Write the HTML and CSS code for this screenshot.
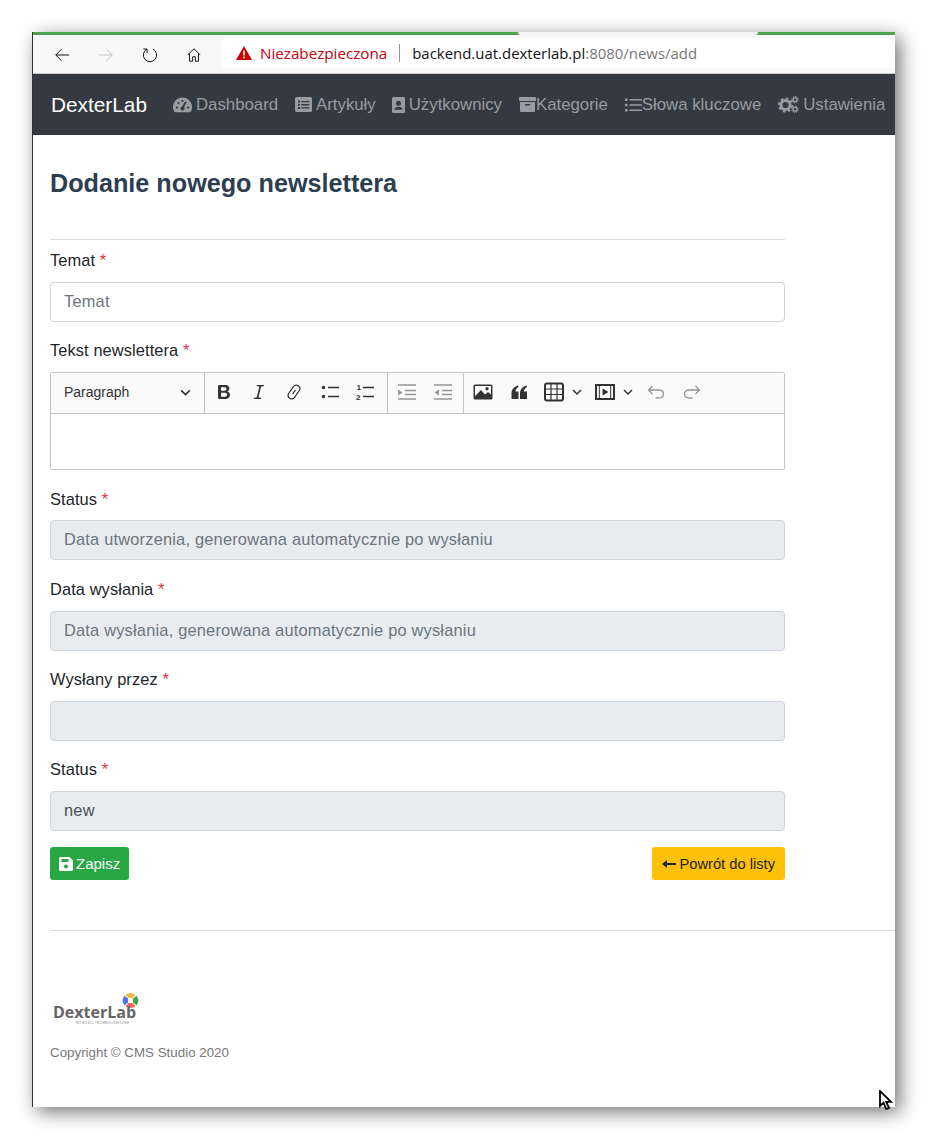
FILE: index.html
```html
<!DOCTYPE html>
<html>
	<head>
		<meta charset="utf-8" />
		<title>Dodanie nowego newslettera</title>
		<link rel="stylesheet" href="styles.css">
	</head>
	<body>
	<div class="window">
		<div class="tabline"><span class="tabgap"></span></div>
		<div class="browserbar">
			<div class="browserbtns">
				<svg class="bicon" viewBox="0 0 18 18"><path d="M17 9H2M8.500 2.500 2 9l6.500 6.500" fill="none" stroke="#111" stroke-width="1.100"/></svg>
				<svg class="bicon" viewBox="0 0 18 18"><path d="M1 9h15M9.500 2.500 16 9l-6.500 6.500" fill="none" stroke="#c4c4c4" stroke-width="1.100"/></svg>
				<svg class="bicon" viewBox="0 0 18 18"><path d="M12.300 2.300A7.500 7.500 0 1 1 5.700 2.300M5.700 2.300V6.800M5.700 2.300H1.500" fill="none" stroke="#111" stroke-width="1.100"/></svg>
				<svg class="bicon" viewBox="0 0 18 18"><path d="M2 9 9 2l7 7M4 7.500V16h3.500v-5h3v5H14V7.500" fill="none" stroke="#111" stroke-width="1.100"/></svg>
			</div>
			<div class="address">
				<svg class="warn" viewBox="0 0 16 14"><path d="M8 0 16 14H0z" fill="#c90000"/><path d="M7.200 4.500h1.600v5H7.200zM7.200 10.600h1.600v1.600H7.200z" fill="#fff"/></svg>
				<span class="notsafe">Niezabezpieczona</span>
				<span class="addrsep"></span>
				<span class="url">backend.uat.dexterlab.pl<span class="urlpath">:8080/news/add</span></span>
			</div>
		</div>

		<nav class="navbar">
			<a class="brand">DexterLab</a>
			<a class="navlink">
				<svg class="nicon" width="19" height="16" viewBox="0 0 19 16"><path d="M9.500 0.500A9.500 9.500 0 0 0 1.300 14.800c.2.300.5.500.9.500h14.600c.4 0 .7-.2.900-.5A9.500 9.500 0 0 0 9.500 .5z" fill="currentColor"/><path d="M12.800 4.800 9.800 10.500" stroke="#343a40" stroke-width="1.800"/><circle cx="9.500" cy="11.500" r="2" fill="#343a40"/><circle cx="4" cy="10.500" r="1.100" fill="#343a40"/><circle cx="5.500" cy="6" r="1.100" fill="#343a40"/><circle cx="9.500" cy="4" r="1.100" fill="#343a40"/><circle cx="15" cy="10.500" r="1.100" fill="#343a40"/></svg>
				<span class="navtext">Dashboard</span>
			</a>
			<a class="navlink navlink-close">
				<svg class="nicon" width="17" height="15" viewBox="0 0 17 15"><path d="M1.500 0h14A1.500 1.500 0 0 1 17 1.500v12a1.500 1.500 0 0 1-1.500 1.500h-14A1.500 1.500 0 0 1 0 13.500v-12A1.500 1.500 0 0 1 1.500 0z" fill="currentColor"/><path d="M3 3.500h2v2H3zM3 6.700h2v2H3zM3 9.900h2v2H3zM6.300 3.900h8v1.300h-8zM6.300 7.100h8v1.300h-8zM6.300 10.300h8v1.300h-8z" fill="#343a40"/></svg>
				<span class="navtext">Artykuły</span>
			</a>
			<a class="navlink">
				<svg class="nicon" width="13" height="16" viewBox="0 0 13 16"><rect width="13" height="16" rx="1.500" fill="currentColor"/><circle cx="6.500" cy="6.200" r="2.500" fill="#343a40"/><path d="M2.500 12.800c0-2 1.500-3 4-3s4 1 4 3z" fill="#343a40"/></svg>
				<span class="navtext">Użytkownicy</span>
			</a>
			<a class="navlink">
				<svg class="nicon tight" width="17" height="15" viewBox="0 0 17 15"><path d="M0 1a1 1 0 0 1 1-1h15a1 1 0 0 1 1 1v3H0zM1 5h15v9a1 1 0 0 1-1 1H2a1 1 0 0 1-1-1z" fill="currentColor"/><path d="M6 7h5v1.500H6z" fill="#343a40"/></svg>
				<span class="navtext">Kategorie</span>
			</a>
			<a class="navlink">
				<svg class="nicon tight" width="17" height="14" viewBox="0 0 17 14"><path d="M0 .5h2.500v2.500H0zM0 5.700h2.500v2.500H0zM0 11h2.500v2.500H0zM4.500 1h12.500v1.500H4.500zM4.500 6.200h12.500v1.500H4.500zM4.500 11.500h12.500V13H4.500z" fill="currentColor"/></svg>
				<span class="navtext">Słowa kluczowe</span>
			</a>
			<a class="navlink">
				<svg class="nicon" width="21" height="17" viewBox="0 0 21 17"><circle cx="7.500" cy="9" r="4.600" fill="none" stroke="currentColor" stroke-width="3"/><circle cx="7.500" cy="9" r="6.600" fill="none" stroke="currentColor" stroke-width="2" stroke-dasharray="2.600 2.580"/><circle cx="17" cy="3.700" r="2" fill="none" stroke="currentColor" stroke-width="1.500"/><circle cx="17" cy="13.300" r="2" fill="none" stroke="currentColor" stroke-width="1.500"/><circle cx="17" cy="3.700" r="3.300" fill="none" stroke="currentColor" stroke-width="1" stroke-dasharray="1.300 1.290"/><circle cx="17" cy="13.300" r="3.300" fill="none" stroke="currentColor" stroke-width="1" stroke-dasharray="1.300 1.290"/></svg>
				<span class="navtext">Ustawienia</span>
			</a>
		</nav>

		<main class="content">
			<h1 class="title">Dodanie nowego newslettera</h1>
			<hr class="line topline">
			<form class="newsform">
				<div class="field">
					<label class="lbl">Temat <span class="req">*</span></label>
					<input class="inp" type="text" placeholder="Temat">
				</div>
				<div class="field field-editor">
					<label class="lbl">Tekst newslettera <span class="req">*</span></label>
					<div class="editor">
						<div class="toolbar">
							<div class="parsel">
								<span>Paragraph</span>
								<svg class="chev" viewBox="0 0 10 10"><path d="M1 3l4 4 4-4" fill="none" stroke="#333" stroke-width="1.500"/></svg>
							</div>
							<span class="tsep"></span>
							<div class="tbtn"><svg viewBox="0 0 20 20"><path d="M10.187 17H5.773c-.637 0-1.092-.138-1.364-.415-.273-.277-.409-.718-.409-1.323V4.738c0-.617.14-1.062.419-1.332.279-.27.73-.406 1.354-.406h4.68c.69 0 1.288.041 1.793.124.506.083.96.242 1.36.478.341.197.644.447.906.75a3.262 3.262 0 0 1 .808 2.162c0 1.401-.722 2.426-2.167 3.075C15.05 10.175 16 11.315 16 13.01a3.756 3.756 0 0 1-2.296 3.504 6.1 6.1 0 0 1-1.517.377c-.571.073-1.238.11-2 .11zm-.217-6.217H7v4.087h3.069c1.977 0 2.965-.69 2.965-2.072 0-.707-.256-1.22-.768-1.537-.512-.319-1.277-.478-2.296-.478zM7 5.130v3.619h2.606c.729 0 1.292-.067 1.690-.2a1.600 1.600 0 0 0 .91-.765c.165-.267.247-.566.247-.897 0-.707-.26-1.176-.778-1.409-.519-.232-1.310-.348-2.375-.348H7z" fill="#333"/></svg></div>
							<div class="tbtn"><svg viewBox="0 0 20 20"><path d="m9.586 14.633.021.004c-.036.335.095.655.393.962.082.083.173.15.274.201h1.474a.6.6 0 1 1 0 1.200H5.304a.6.6 0 0 1 0-1.200h1.150c.474-.07.809-.182 1.005-.334.157-.122.291-.32.404-.597l2.416-9.550a1.053 1.053 0 0 0-.281-.823 1.120 1.120 0 0 0-.442-.296H8.150a.6.6 0 0 1 0-1.200h6.443a.6.6 0 1 1 0 1.200h-1.195c-.376.056-.65.155-.823.296-.215.175-.423.439-.623.79l-2.366 9.347z" fill="#333"/></svg></div>
							<div class="tbtn"><svg viewBox="0 0 20 20"><g fill="none" stroke="#333" stroke-width="1.200" transform="rotate(-55 10 10)"><rect x="2.500" y="6.500" width="15" height="7" rx="3.500"/><path d="M7.500 10h5"/></g></svg></div>
							<div class="tbtn"><svg viewBox="0 0 20 20"><circle cx="3.500" cy="5.500" r="1.700" fill="#333"/><circle cx="3.500" cy="14.500" r="1.700" fill="#333"/><path d="M8 5.500h11M8 14.500h11" stroke="#333" stroke-width="1.500"/></svg></div>
							<div class="tbtn"><svg viewBox="0 0 20 20"><text class="numtxt" x="1.500" y="8">1</text><text class="numtxt" x="1" y="18">2</text><path d="M8 5.500h11M8 14.500h11" stroke="#333" stroke-width="1.500"/></svg></div>
							<span class="tsep tsep-mid"></span>
							<div class="tbtn off"><svg viewBox="0 0 20 20"><path d="M1 3h18M8 8.500h11M8 12.500h11M1 17h18" stroke="#333" stroke-width="1.300"/><path d="M1 7.500v6l4.500-3z" fill="#333"/></svg></div>
							<div class="tbtn off"><svg viewBox="0 0 20 20"><path d="M1 3h18M9 8.500h10M9 12.500h10M1 17h18" stroke="#333" stroke-width="1.300"/><path d="M6 7.500v6l-4.500-3z" fill="#333"/></svg></div>
							<span class="tsep tsep-last"></span>
							<div class="tbtn"><svg viewBox="0 0 20 20"><path d="M2 2.500h16a1.500 1.500 0 0 1 1.500 1.500v12a1.500 1.500 0 0 1-1.500 1.500H2A1.500 1.500 0 0 1 .5 16V4A1.500 1.500 0 0 1 2 2.500z" fill="#333"/><path d="M2 4h16v8.500l-3-2.500-3 2.500-4-4.500-6 6z" fill="#fff"/><circle cx="14" cy="6.700" r="1.700" fill="#333"/></svg></div>
							<div class="tbtn"><svg viewBox="0 0 20 20"><path d="M2.500 17v-5.500C2.500 7.500 5 4.700 9 3.500l.5 1.400C7.500 6 6.500 7.500 6.300 9.500H9.500V17zM11 17v-5.500c0-4 2.500-6.800 6.500-8l.5 1.400C16 6 15 7.500 14.800 9.500H18V17z" fill="#333"/></svg></div>
							<div class="tbtn wide">
								<svg viewBox="0 0 20 20"><rect x="1" y="1.500" width="18" height="17" rx="2" fill="none" stroke="#333" stroke-width="2"/><path d="M1 7h18M1 12.500h18M7 2v16M13 2v16" stroke="#333" stroke-width="1.200"/></svg>
								<svg class="chev small" viewBox="0 0 10 10"><path d="M1 3l4 4 4-4" fill="none" stroke="#333" stroke-width="1.500"/></svg>
							</div>
							<div class="tbtn wide">
								<svg viewBox="0 0 20 20"><rect x="1" y="3" width="18" height="14" fill="none" stroke="#333" stroke-width="2"/><path d="M4.300 3v14M15.700 3v14" stroke="#333" stroke-width="1"/><path d="M7.500 6.500v7l6-3.500z" fill="#333"/></svg>
								<svg class="chev small" viewBox="0 0 10 10"><path d="M1 3l4 4 4-4" fill="none" stroke="#333" stroke-width="1.500"/></svg>
							</div>
							<div class="tbtn off"><svg viewBox="0 0 20 20"><path d="M6.500 4 2.500 8l4 4M2.500 8h10c3 0 5 1.500 5 4s-2 4-5 4h-3" fill="none" stroke="#333" stroke-width="1.300"/></svg></div>
							<div class="tbtn off"><svg viewBox="0 0 20 20"><path d="M13.500 4l4 4-4 4M17.500 8h-10c-3 0-5 1.500-5 4s2 4 5 4h3" fill="none" stroke="#333" stroke-width="1.300"/></svg></div>
						</div>
						<div class="editbody"></div>
					</div>
				</div>
				<div class="field field-status">
					<label class="lbl lbl-close">Status <span class="req">*</span></label>
					<input class="inp" type="text" disabled placeholder="Data utworzenia, generowana automatycznie po wysłaniu">
				</div>
				<div class="field">
					<label class="lbl">Data wysłania <span class="req">*</span></label>
					<input class="inp" type="text" disabled placeholder="Data wysłania, generowana automatycznie po wysłaniu">
				</div>
				<div class="field">
					<label class="lbl">Wysłany przez <span class="req">*</span></label>
					<input class="inp" type="text" disabled>
				</div>
				<div class="field field-last">
					<label class="lbl">Status <span class="req">*</span></label>
					<input class="inp" type="text" disabled value="new">
				</div>
				<div class="actions">
					<button type="button" class="btn btn-green">
						<svg width="14" height="14" viewBox="0 0 14 14"><path d="M1.500 0H10.500L14 3.500V12.500A1.500 1.500 0 0 1 12.500 14H1.500A1.500 1.500 0 0 1 0 12.500V1.500A1.500 1.500 0 0 1 1.500 0z" fill="#fff"/><path d="M2.500 2h7v3h-7z" fill="#28a745"/><circle cx="7" cy="9.500" r="2" fill="#28a745"/></svg>
						Zapisz
					</button>
					<button type="button" class="btn btn-yellow">
						<svg width="14" height="10" viewBox="0 0 14 10"><path d="M14 4H5V1L0 5l5 4V6h9z" fill="#212529"/></svg>
						Powrót do listy
					</button>
				</div>
			</form>
			<hr class="line footline">
			<div class="logo">
				<svg class="logomark" width="17" height="17" viewBox="0 0 17 17"><path d="M3.500 3A7.500 7.500 0 0 1 13.500 3L10.500 6H6.500z" fill="#f7b84b"/><path d="M14.500 3.800A7.500 7.500 0 0 1 14.500 13.200L11 10.500V6.500z" fill="#3fa648"/><path d="M13.500 14A7.500 7.500 0 0 1 3.500 14L6.500 11h4z" fill="#f2645a"/><path d="M2.500 13.200A7.500 7.500 0 0 1 2.500 3.800L6 6.500v4z" fill="#4a74e8"/></svg>
				<span class="logoname">DexterLab</span>
				<span class="logosub">NOWOŚCI TECHNOLOGICZNE</span>
			</div>
			<p class="copy">Copyright © CMS Studio 2020</p>
		</main>
		<svg class="cursor" width="14" height="20" viewBox="0 0 14 20"><path d="M1 1v15l3.500-3.200L7.300 19l2.700-1.200-2.800-6H12z" fill="#fff" stroke="#000" stroke-width="1.800"/></svg>
	</div>
	</body>
</html>
```

FILE: styles.css
```css
html,body{
	margin: 0;
	height: 1139px;
	overflow: hidden;
	background-color: white;
}
body{
	padding-top: 32px;
	box-sizing: border-box;
	font-family: "Liberation Sans", Arial, sans-serif;
	font-size: 16px;
	color: #212529;
}
.window{
	position: relative;
	width: 863px;
	height: 1075px;
	margin-left: 32px;
	box-sizing: border-box;
	border-left: 1px solid #333;
	background-color: white;
	box-shadow: 5px 5px 18px rgba(0,0,0,.55);
}
.tabline{
	height: 3px;
	background-color: #4fa24f;
	display: flex;
}
.tabgap{
	width: 240px;
	height: 3px;
	margin-left: 485px;
	background-color: #f5f5f5;
	border-radius: 0 0 3px 3px;
}
.browserbar{
	display: flex;
	align-items: center;
	height: 39px;
	padding-top: 1px;
	box-sizing: border-box;
	background-color: #f8f8f8;
	border-bottom: 1px solid #ccc;
}
.browserbtns{
	display: flex;
	width: 189px;
	padding-left: 21px;
	box-sizing: border-box;
	gap: 28px;
}
.bicon{
	width: 16px;
	height: 16px;
}
.address{
	flex: 1;
	display: flex;
	align-items: center;
	height: 30px;
	margin-bottom: 3px;
	background-color: white;
	border-radius: 4px 0 0 4px;
	font-family: "Open Sans", sans-serif;
	font-size: 15.2px;
}
.warn{
	width: 16px;
	height: 14px;
	margin-left: 14px;
}
.notsafe{
	margin-left: 8px;
	color: #c5000b;
}
.addrsep{
	width: 1px;
	height: 18px;
	margin: 0 12px;
	background-color: #999;
}
.url{
	font-size: 14.95px;
	color: #111;
}
.urlpath{
	color: #777;
}
.navbar{
	display: flex;
	align-items: center;
	height: 61px;
	padding-left: 18px;
	background-color: #343a40;
	white-space: nowrap;
}
.brand{
	width: 97px;
	margin-right: 26px;
	font-size: 20.8px;
	color: white;
}
.navlink{
	display: flex;
	align-items: center;
	margin-right: 17px;
	font-size: 16.8px;
	color: #999c9f;
}
.navlink-close{
	margin-right: 16px;
}
.nicon{
	margin-right: 4px;
}
.nicon.tight{
	margin-right: 0;
}
.content{
	padding: 34px 0 0 17px;
}
.title{
	margin: 0;
	font-size: 25.2px;
	line-height: 29px;
	font-weight: bold;
	color: #2c3e50;
}
.line{
	margin: 0;
	height: 1px;
	border: 0;
	background-color: #ddd;
}
.topline{
	width: 735px;
	margin: 41px 0 9px 0;
}
.newsform{
	width: 735px;
}
.field{
	margin-bottom: 17px;
}
.field-editor{
	margin-bottom: 18px;
}
.field-status{
	margin-bottom: 18px;
}
.field-last{
	margin-bottom: 16px;
}
.lbl{
	display: block;
	height: 24px;
	line-height: 22px;
	margin-bottom: 9px;
	font-size: 16.4px;
	letter-spacing: .1px;
}
.lbl-close{
	margin-bottom: 8px;
}
.req{
	color: #dc3545;
}
.inp{
	display: block;
	width: 100%;
	height: 40px;
	padding: 0 13px 2px 13px;
	box-sizing: border-box;
	border: 1px solid #ced4da;
	border-radius: 4px;
	background-color: white;
	font-family: inherit;
	font-size: 16.4px;
	letter-spacing: .2px;
	color: #495057;
}
.inp::placeholder{
	color: #6c757d;
	opacity: 1;
}
.inp:disabled{
	background-color: #e9ecef;
}
.editor{
	border: 1px solid #c4c4c4;
	border-radius: 2px;
}
.toolbar{
	display: flex;
	align-items: flex-start;
	height: 40px;
	background-color: #fafafa;
	border-bottom: 1px solid #c4c4c4;
}
.parsel{
	display: flex;
	align-items: center;
	justify-content: space-between;
	width: 153px;
	height: 38px;
	margin-right: -3.5px;
	padding: 0 13px;
	box-sizing: border-box;
	font-size: 14px;
	color: #333;
}
.chev{
	width: 11px;
	height: 11px;
}
.tsep{
	width: 1px;
	height: 40px;
	margin: 0 1px 0 3.5px;
	background-color: #c4c4c4;
}
.tsep-mid{
	margin-left: 4.5px;
}
.tsep-last{
	margin: 0 1.5px 0 3px;
}
.tbtn{
	display: flex;
	align-items: center;
	justify-content: center;
	width: 35.4px;
	height: 38px;
}
.tbtn svg{
	width: 20px;
	height: 20px;
}
.tbtn .chev.small{
	width: 10px;
	height: 10px;
	margin-left: 8px;
}
.tbtn.wide{
	justify-content: flex-start;
	width: 51px;
	padding-left: 7.7px;
	box-sizing: border-box;
}
.tbtn.off{
	opacity: .5;
}
.numtxt{
	font-size: 8px;
	font-weight: bold;
	fill: #333;
}
.editbody{
	height: 55px;
	background-color: white;
}
.actions{
	display: flex;
	justify-content: space-between;
}
.btn{
	display: flex;
	align-items: center;
	gap: 3px;
	height: 33px;
	padding: 0 9px;
	border: 0;
	border-radius: 3px;
	font-family: inherit;
}
.btn-green{
	background-color: #28a745;
	color: white;
	font-size: 15px;
}
.btn-yellow{
	padding: 0 10px;
	background-color: #ffc107;
	color: #212529;
	font-size: 14.7px;
}
.footline{
	margin: 50px 0 0 0;
}
.logo{
	position: relative;
	width: 90px;
	height: 35px;
	margin: 61px 0 0 2px;
}
.logomark{
	position: absolute;
	top: 0;
	right: 3px;
}
.logoname{
	position: absolute;
	left: 1px;
	top: 10px;
	font-family: "Open Sans", sans-serif;
	font-size: 16px;
	line-height: 20px;
	font-weight: bold;
	color: #666;
}
.logosub{
	position: absolute;
	left: 24px;
	top: 29px;
	font-size: 3px;
	line-height: 4px;
	letter-spacing: .45px;
	color: #777;
	white-space: nowrap;
}
.copy{
	margin: 17px 0 0 0;
	font-size: 13.35px;
	line-height: 18px;
	color: #777;
}
.cursor{
	position: absolute;
	left: 846px;
	top: 1058px;
}
```
